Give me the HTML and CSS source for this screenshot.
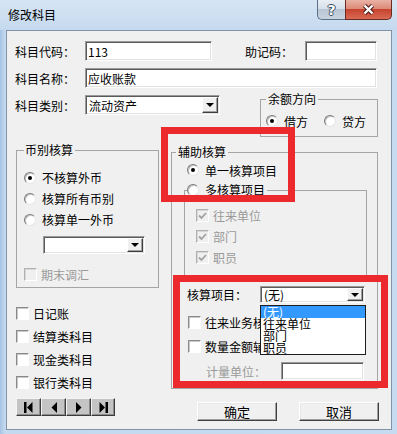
FILE: index.html
```html
<!DOCTYPE html>
<html lang="zh-CN">
<head>
<meta charset="utf-8">
<title>修改科目</title>
<link rel="stylesheet" href="styles.css">
</head>
<body>
<div class="window">
  <header class="titlebar">
    <span class="title">修改科目</span>
    <div class="caption-btns">
      <span class="cbtn help">?</span>
      <span class="cbtn close"><svg width="13" height="11" viewBox="0 0 13 11"><path class="x-out" d="M2.5 1.5 L10.5 9.5 M10.5 1.5 L2.5 9.5"/><path class="x-in" d="M2.5 1.5 L10.5 9.5 M10.5 1.5 L2.5 9.5"/></svg></span>
    </div>
  </header>
  <div class="client">
    <div class="row r1">
      <span class="lbl w70">科目代码：</span>
      <span class="input w127">113</span>
      <span class="lbl mnem">助记码：</span>
      <span class="input w72"></span>
    </div>
    <div class="row r2">
      <span class="lbl w70">科目名称：</span>
      <span class="input w292">应收账款</span>
    </div>
    <div class="row r3">
      <div class="r3-left">
        <span class="lbl w70">科目类别：</span>
        <span class="select sel-type"><span class="sel-text">流动资产</span><span class="sel-btn"></span></span>
      </div>
      <fieldset class="grp grp-balance">
        <legend>余额方向</legend>
        <div class="radios-inline">
          <span class="opt"><span class="radio on"></span>借方</span>
          <span class="opt opt-credit"><span class="radio"></span>贷方</span>
        </div>
      </fieldset>
    </div>
    <div class="middle">
      <div class="col-left">
        <fieldset class="grp grp-currency">
          <legend>币别核算</legend>
          <div class="opt r21"><span class="radio on"></span>不核算外币</div>
          <div class="opt r21"><span class="radio"></span>核算所有币别</div>
          <div class="opt r21"><span class="radio"></span>核算单一外币</div>
          <span class="select sel-cur"><span class="sel-text"></span><span class="sel-btn"></span></span>
          <div class="opt chk-fx dis"><span class="chk dis"></span>期末调汇</div>
        </fieldset>
        <div class="checks">
          <div class="opt r23"><span class="chk"></span>日记账</div>
          <div class="opt r23"><span class="chk"></span>结算类科目</div>
          <div class="opt r23"><span class="chk"></span>现金类科目</div>
          <div class="opt r23"><span class="chk"></span>银行类科目</div>
        </div>
        <div class="nav">
          <span class="navbtn"><svg width="9" height="11" viewBox="0 0 9 11"><rect x="0" y="0" width="2.5" height="11"/><polygon points="8.5,0 8.5,11 3,5.5"/></svg></span>
          <span class="navbtn"><svg width="6" height="11" viewBox="0 0 6 11"><polygon points="6,0 6,11 0.5,5.5"/></svg></span>
          <span class="navbtn"><svg width="6" height="11" viewBox="0 0 6 11"><polygon points="0,0 0,11 5.5,5.5"/></svg></span>
          <span class="navbtn last"><svg width="9" height="11" viewBox="0 0 9 11"><polygon points="0.5,0 0.5,11 6,5.5"/><rect x="6.5" y="0" width="2.5" height="11"/></svg></span>
        </div>
      </div>
      <div class="col-right">
        <fieldset class="grp grp-aux">
          <legend>辅助核算</legend>
          <div class="opt single"><span class="radio on"></span>单一核算项目</div>
          <fieldset class="grp grp-multi">
            <legend><span class="opt-inline"><span class="radio"></span>多核算项目</span></legend>
            <div class="opt r21 inner dis"><span class="chk dis"><svg width="9" height="9" viewBox="0 0 9 9"><polyline points="1,4.5 3.5,7 8,2"/></svg></span>往来单位</div>
            <div class="opt r21 inner dis"><span class="chk dis"><svg width="9" height="9" viewBox="0 0 9 9"><polyline points="1,4.5 3.5,7 8,2"/></svg></span>部门</div>
            <div class="opt r21 inner dis"><span class="chk dis"><svg width="9" height="9" viewBox="0 0 9 9"><polyline points="1,4.5 3.5,7 8,2"/></svg></span>职员</div>
          </fieldset>
          <div class="row item-row">
            <span class="lbl w73">核算项目：</span>
            <span class="select sel-item">
              <span class="sel-text">(无)</span><span class="sel-btn"></span>
              <span class="dd-list">
                <span class="dd-item sel">(无)</span>
                <span class="dd-item">往来单位</span>
                <span class="dd-item">部门</span>
                <span class="dd-item">职员</span>
              </span>
            </span>
          </div>
          <div class="opt r20 chk-a"><span class="chk"></span>往来业务核算</div>
          <div class="opt r20 chk-b"><span class="chk"></span>数量金额辅助核算</div>
          <div class="row unit-row">
            <span class="lbl w75 dis">计量单位：</span>
            <span class="input w83 h18"></span>
          </div>
        </fieldset>
        <div class="actions">
          <span class="btn">确定</span>
          <span class="btn">取消</span>
        </div>
      </div>
    </div>
    <div class="mark mark1"></div>
    <div class="mark mark2"></div>
  </div>
</div>
</body>
</html>
```
FILE: styles.css
```css
* { box-sizing: border-box; }
html, body { margin: 0; padding: 0; }
body {
  width: 397px; height: 434px; overflow: hidden;
  background: #c4d8ee;
  font-family: "Noto Sans CJK SC", "Noto Sans", sans-serif;
  font-size: 12px; color: #000;
}
.window {
  width: 397px; height: 434px;
  background: linear-gradient(to right, #a6c3e4 0, #c4d8ee 5px, #c7dbf0 100%);
}
.titlebar {
  height: 30px; display: flex; justify-content: space-between; align-items: flex-start;
  background: linear-gradient(to bottom, #d6e5f4 0, #c5d9ee 100%);
}
.title { padding-left: 8px; line-height: 30px; }
.caption-btns { display: flex; margin-right: 5px; }
.cbtn { height: 20px; display: flex; align-items: center; justify-content: center; }
.help {
  width: 28px; border: 1px solid #5d7087; border-top: 0; border-right: 0;
  border-radius: 0 0 0 5px;
  background: linear-gradient(to bottom, #e9eef4 0, #d7e0ea 45%, #b8c5d3 50%, #c8d3df 100%);
  color: #fff; font-family: "DejaVu Sans", sans-serif; font-weight: bold; font-size: 14px;
  text-shadow: 1px 0 0 #3a4b5e, -1px 0 0 #3a4b5e, 0 1px 0 #3a4b5e, 0 -1px 0 #3a4b5e;
}
.close {
  width: 47px; border: 1px solid #6b2a22; border-top: 0;
  border-radius: 0 0 5px 0;
  background: linear-gradient(to bottom, #eab2a6 0, #dc8a79 45%, #c8442f 50%, #d86a52 100%);
}
.x-out { stroke: #4a1d18; stroke-width: 4.4; fill: none; }
.x-in { stroke: #fff; stroke-width: 2.4; fill: none; }

.client {
  position: relative; margin-left: 6px; width: 386px; height: 400px;
  border: 1px solid #8193a8; background: #f0f0f0; padding-left: 8px;
}
.row { display: flex; align-items: center; }
.lbl { flex: none; white-space: nowrap; }
.w70 { width: 70px; }
.w73 { width: 73px; }
.w75 { width: 75px; }
.mnem { width: 60px; margin-left: 33px; }
.dis { color: #9a9a9a; }

.input {
  display: flex; align-items: center; height: 20px; flex: none;
  background: #fff; padding-left: 2px; white-space: nowrap;
  border: 1px solid; border-color: #9a9a9a #fff #fff #9a9a9a;
  box-shadow: inset 1px 1px 0 #5a5a5a, inset -1px -1px 0 #e3e3e3;
}
.w127 { width: 127px; }
.w72 { width: 72px; }
.w292 { width: 292px; }
.w83 { width: 83px; }
.h18 { height: 18px; }

.select {
  position: relative; display: flex; flex: none; background: #fff; padding: 1px;
  border: 1px solid; border-color: #9a9a9a #fff #fff #9a9a9a;
  box-shadow: inset 1px 1px 0 #5a5a5a, inset -1px -1px 0 #e3e3e3;
}
.sel-text { flex: 1; display: flex; align-items: center; padding-left: 2px; white-space: nowrap; }
.sel-btn {
  width: 16px; flex: none; display: flex; align-items: center; justify-content: center;
  background: #f0f0f0; border: 1px solid; border-color: #fff #404040 #404040 #fff;
  box-shadow: inset -1px -1px 0 #a0a0a0;
}
.sel-btn::after {
  content: ""; border-left: 4px solid transparent; border-right: 4px solid transparent;
  border-top: 4px solid #000;
}
.sel-type { width: 135px; height: 20px; }
.sel-cur { width: 102px; height: 18px; margin: 6px 0 0 19px; }
.sel-item { width: 105px; height: 17px; }

.r1 { margin-top: 10px; height: 20px; }
.r2 { margin-top: 7px; height: 20px; }
.r3 { margin-top: 4px; align-items: flex-start; }
.r3-left { display: flex; align-items: center; margin-top: 3px; height: 20px; }

.grp { margin: 0; padding: 0; min-width: 0; border: 1px solid #a5a5a5; }
.grp > legend { padding: 0 2px; line-height: 14px; font-size: 12px; }

.opt { display: flex; align-items: center; white-space: nowrap; }
.opt-inline { display: inline-flex; align-items: center; vertical-align: top; height: 20px; }
.radio {
  position: relative; flex: none; width: 12px; height: 12px; margin-right: 6px;
  border-radius: 50%; background: #fff;
  border: 1px solid; border-color: #7a7a7a #e6e6e6 #e6e6e6 #7a7a7a;
  box-shadow: inset 1px 1px 0 #c4c4c4;
}
.radio.on::after {
  content: ""; position: absolute; left: 3px; top: 3px; width: 4px; height: 4px;
  border-radius: 50%; background: #000;
}
.chk {
  flex: none; width: 13px; height: 13px; margin-right: 4px; background: #fff;
  display: flex; align-items: center; justify-content: center;
  border: 1px solid; border-color: #8a8a8a #fff #fff #8a8a8a;
  box-shadow: inset 1px 1px 0 #c8c8c8;
}
.chk.dis { background: #f0f0f0; border-color: #b0b0b0 #fff #fff #b0b0b0; box-shadow: inset 1px 1px 0 #d8d8d8; }
.chk svg polyline { fill: none; stroke: #a0a0a0; stroke-width: 1.8; }

.grp-balance { width: 118px; margin-left: 40px; padding: 5px 0 5px 5px; }
.radios-inline { display: flex; height: 20px; align-items: center; }
.opt-credit { margin-left: 16px; }

.middle { display: flex; align-items: flex-start; margin-top: 6px; }
.col-left { width: 143px; margin-left: 1px; flex: none; }
.col-right { width: 207px; margin-left: 12px; margin-top: 2px; flex: none; }

.grp-currency { width: 143px; padding: 10px 0 3px 7px; }
.grp-currency > legend { padding: 0 2px 0 1px; }
.r21 { height: 21px; }
.r20 { height: 20px; }
.r23 { height: 23px; }
.chk-fx { height: 20px; margin-top: 10px; }

.checks { margin-top: 14px; }
.nav { display: flex; margin-top: 4px; }
.navbtn {
  width: 25px; height: 18px; display: flex; align-items: center; justify-content: center;
  background: #c4c4c4; border: 1px solid; border-color: #f4f4f4 #3c3c3c #3c3c3c #f4f4f4;
  box-shadow: inset -1px -1px 0 #8c8c8c;
}
.navbtn.last { width: 24px; }
.navbtn svg { fill: #000; }

.grp-aux { width: 207px; padding: 1px 0 8px 4px; }
.single { height: 20px; margin-left: 11px; }
.grp-multi { width: 183px; margin-left: 8px; padding: 5px 0 11px 2px; }
.grp-multi > legend { padding: 0 2px 0 0; line-height: 20px; }
.inner { margin-left: 9px; }
.item-row { height: 17px; margin: 6px 0 0 11px; }
.chk-a { margin: 9px 0 0 12px; }
.chk-b { margin: 4px 0 0 12px; }
.unit-row { height: 18px; margin: 6px 0 0 30px; }

.dd-list {
  position: absolute; left: -1px; top: 18px; width: 106px; z-index: 2;
  background: #fff; border: 1px solid #1e1e1e; display: flex; flex-direction: column;
}
.dd-item { height: 12px; line-height: 12px; font-size: 12px; padding-left: 2px; white-space: nowrap; }
.dd-item.sel { background: #3399ff; color: #fff; }

.actions { display: flex; gap: 22px; margin: 13px 0 0 26px; }
.btn {
  width: 80px; height: 19px; flex: none; display: flex; align-items: center; justify-content: center;
  font-size: 13px; background: #f0f0f0;
  border: 1px solid; border-color: #fff #404040 #404040 #fff;
  box-shadow: inset -1px -1px 0 #a0a0a0, inset 1px 1px 0 #e8e8e8;
}

.mark { position: absolute; border: 7px solid #ec2a2e; z-index: 3; }
.mark1 { left: 154px; top: 96px; width: 134px; height: 75px; }
.mark2 { left: 166px; top: 244px; width: 215px; height: 113px; }
```
